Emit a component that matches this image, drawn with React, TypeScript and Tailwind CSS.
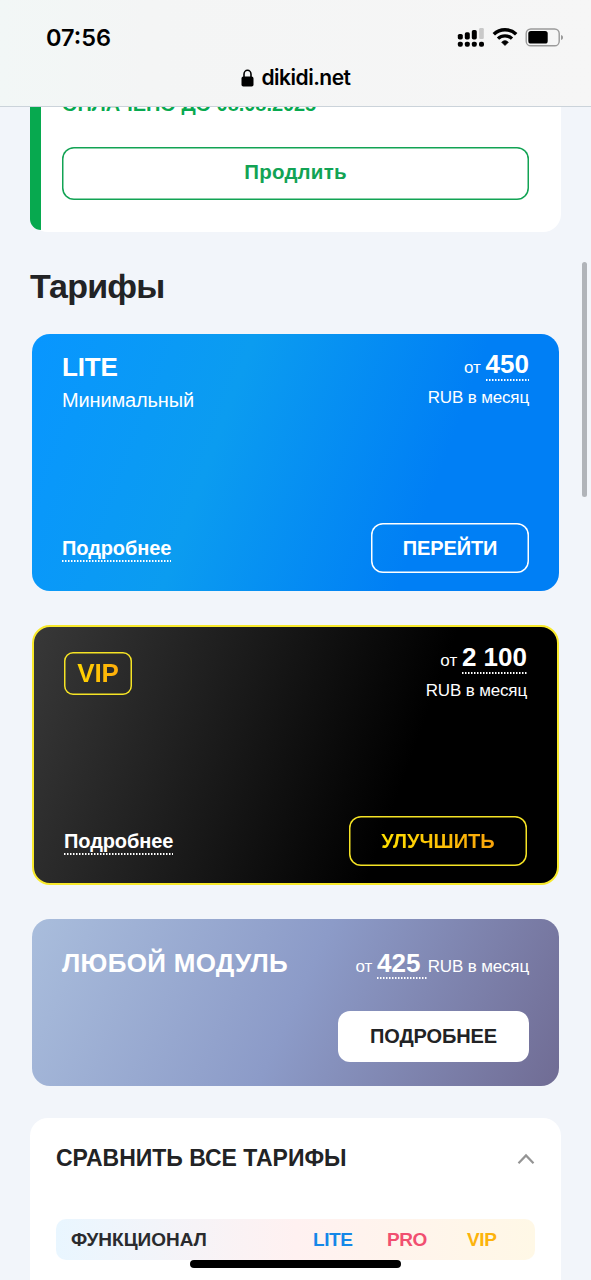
import type { ReactNode } from "react";
import { clsx } from "clsx";

function StatusIcons() {
  return (
    <svg className="h-[22px] w-[108px]" viewBox="0 0 108 22">
      {/* dual sim signal */}
      <g fill="#000">
        <rect x="0.8" y="8.9" width="5" height="5.5" rx="1.7" />
        <rect x="7.8" y="7.2" width="5" height="7.2" rx="1.7" />
        <rect x="14.8" y="5.1" width="5" height="9.3" rx="1.7" />
        <rect x="0.8" y="16.7" width="5" height="5" rx="1.9" />
        <rect x="7.8" y="16.7" width="5" height="5" rx="1.9" />
        <rect x="14.8" y="16.7" width="5" height="5" rx="1.9" />
        <rect x="22" y="16.7" width="5" height="5" rx="1.9" />
      </g>
      <rect x="22.2" y="3" width="4.6" height="11" rx="1.2" fill="#c9c9c9" />
      {/* wifi */}
      <g fill="none" stroke="#000">
        <path d="M36.8 9.2a16.2 16.2 0 0 1 22.4 0" strokeWidth="3.5" />
        <path d="M41 13.6a10.2 10.2 0 0 1 14 0" strokeWidth="3.3" />
      </g>
      <path d="M44.6 17.2a5 5 0 0 1 6.8 0L48 20.6z" fill="#000" stroke="#000" strokeWidth="0.6" strokeLinejoin="round" />
      {/* battery */}
      <rect x="69.2" y="4" width="33" height="16.8" rx="4.6" fill="none" stroke="#9a9a9a" strokeWidth="1.4" />
      <rect x="71.3" y="6.1" width="19.4" height="12.4" rx="2.6" fill="#000" />
      <path d="M104 10.1c1.6.5 2 1.4 2 2.4s-.4 1.9-2 2.4z" fill="#9a9a9a" />
    </svg>
  );
}

function BrowserHeader() {
  return (
    <header className="relative z-10 h-[107px] shrink-0 border-b border-[#cbd3da] bg-gradient-to-r from-[#f2f7f6] via-[#f4f5f5] via-25% to-[#f6f6f6] font-['Inter',sans-serif] text-black">
      <div className="flex items-start justify-between pl-[46px] pr-[26px] pt-[22px]">
        <span className="text-[23.5px] font-semibold leading-8">07:56</span>
        <span className="pt-[3px]">
          <StatusIcons />
        </span>
      </div>
      <div className="mt-2 flex items-center justify-center gap-[7px] pl-px">
        <svg className="h-[18px] w-[13px]" viewBox="0 0 13 18">
          <rect x="0.5" y="7.6" width="12" height="9.9" rx="1.8" fill="#000" />
          <path d="M3 8.4V5.2a3.5 3.9 0 0 1 7 0v3.2" fill="none" stroke="#000" strokeWidth="1.6" />
        </svg>
        <span className="pt-px text-[21px] font-semibold leading-[30px] tracking-[-0.5px]">dikidi.net</span>
      </div>
    </header>
  );
}

function Dotted({ children, className }: { children: ReactNode; className?: string }) {
  return (
    <span
      className={clsx(
        "inline-block whitespace-pre bg-[repeating-linear-gradient(90deg,#fff_0_1px,#ffffff80_1px_2px,transparent_2px_3px)] bg-[length:100%_2px] bg-bottom bg-no-repeat font-bold",
        className,
      )}
    >
      {children}
    </span>
  );
}

function Price({ amount }: { amount: string }) {
  return (
    <div className="text-right text-[17px] text-white">
      <div className="h-[34px] leading-[27px]">
        от <Dotted className="h-[30px] text-[26px] leading-[27px]">{amount}</Dotted>
      </div>
      <div className="leading-[26px] tracking-[-0.15px]">RUB в месяц</div>
    </div>
  );
}

function More() {
  return <Dotted className="h-[28px] text-[20px] leading-[28px] tracking-[-0.1px] text-white">Подробнее</Dotted>;
}

export default function App() {
  return (
    <div className="relative flex h-[1280px] w-[591px] flex-col overflow-hidden bg-[#f2f5fa] font-['Liberation_Sans',Arial,sans-serif] text-[#222325]">
      <BrowserHeader />

      <main className="flex flex-col px-[30px]">
        {/* current subscription */}
        <section className="-mt-[17px] flex h-[142px] rounded-b-[18px] bg-white">
          <div className="h-[140px] w-[11px] shrink-0 rounded-bl-[11px] bg-[#07a94f]" />
          <div className="flex flex-col pl-[21px] pr-8">
            <p className="text-[20px] font-bold leading-7 tracking-[-0.05px] text-[#07a94f]">ОПЛАЧЕНО ДО 08.08.2025</p>
            <button className="mt-[29px] h-[53px] w-[467px] shrink-0 rounded-[12px] pb-[2px] text-[20.5px] font-bold tracking-[0.2px] text-[#12a354] shadow-[inset_0_0_0_1.5px_#12a354]">
              Продлить
            </button>
          </div>
        </section>

        <h1 className="mt-[32px] text-[34px] font-bold leading-[44px] tracking-[-0.8px]">Тарифы</h1>

        <div className="mt-[26px] flex flex-col gap-[34px] px-[2px]">
          <section className="flex h-[257px] flex-col justify-between rounded-[18px] bg-[linear-gradient(110deg,#0896ff_0%,#0b9cf0_36%,#007ff5_74%,#007ff5_100%)] px-[30px] pb-[18px] pt-[17px] text-white">
            <div className="flex justify-between">
              <div>
                <h2 className="text-[26px] font-bold leading-8 tracking-[-0.2px]">LITE</h2>
                <p className="mt-[3px] text-[20px] leading-7 tracking-[-0.15px]">Минимальный</p>
              </div>
              <Price amount="450" />
            </div>
            <div className="flex items-end justify-between">
              <div className="flex pb-[11px]">
                <More />
              </div>
              <button className="h-[50px] w-[158px] rounded-[12px] text-[20px] font-bold tracking-[-0.1px] shadow-[inset_0_0_0_1.5px_#fff]">
                ПЕРЕЙТИ
              </button>
            </div>
          </section>

          <section className="flex h-[260px] flex-col justify-between rounded-[18px] border-2 border-[#f8e92b] bg-[linear-gradient(110deg,#383838_0%,#000_69%)] px-[30px] pb-[17px] pt-[17px] text-white">
            <div className="flex justify-between">
              <div className="mt-[8px] flex h-[43px] w-[68px] items-center justify-center rounded-[9px] shadow-[inset_0_0_0_1.5px_#f5e325]">
                <span className="bg-gradient-to-r from-[#ffd500] to-[#ffad0a] bg-clip-text text-[26px] font-bold tracking-[-0.2px] text-transparent">
                  VIP
                </span>
              </div>
              <Price amount="2 100" />
            </div>
            <div className="flex items-end justify-between">
              <div className="flex pb-[11px]">
                <More />
              </div>
              <button className="h-[50px] w-[178px] rounded-[12px] text-[20px] font-bold shadow-[inset_0_0_0_1.5px_#f5e325]">
                <span className="bg-gradient-to-r from-[#ffe100] to-[#f9a30b] bg-clip-text text-transparent">
                  УЛУЧШИТЬ
                </span>
              </button>
            </div>
          </section>

          <section className="flex h-[167px] flex-col justify-between rounded-[18px] bg-[linear-gradient(115deg,#a9bddc_0%,#8c9bc8_50%,#706c94_100%)] px-[30px] pb-[24px] pt-[29px] text-white">
            <div className="flex justify-between">
              <h2 className="text-[26px] font-bold leading-[30px] tracking-[0.3px]">ЛЮБОЙ МОДУЛЬ</h2>
              <p className="text-[17px] leading-[30px]">
                от <Dotted className="h-[31px] text-[26px] leading-[30px]">{"425 "}</Dotted>
                <span className="tracking-[-0.15px]">RUB в месяц</span>
              </p>
            </div>
            <button className="h-[51px] w-[191px] self-end rounded-[12px] bg-white pb-px text-[20px] font-bold tracking-[-0.1px] text-[#222325]">
              ПОДРОБНЕЕ
            </button>
          </section>
        </div>

        {/* plan comparison */}
        <section className="mt-[32px] h-[200px] rounded-[18px] bg-white px-[26px] pt-[24px]">
          <div className="flex items-center justify-between">
            <h2 className="text-[23px] font-bold leading-8">СРАВНИТЬ ВСЕ ТАРИФЫ</h2>
            <svg className="mt-[2px] h-[12px] w-[18px]" viewBox="0 0 18 12">
              <path d="M1.5 10.2 9 2.4l7.5 7.8" fill="none" stroke="#949494" strokeWidth="2.2" />
            </svg>
          </div>
          <div className="mt-[45px] grid h-[41px] w-[479px] grid-cols-[242px_74px_80px_68px] items-center rounded-[10px] bg-gradient-to-r from-[#e9f6ff] via-[#fff1f1] to-[#fff8e6] pl-[15px] pt-[2px] text-[19px] font-bold">
            <span className="text-[#2a2b2e]">ФУНКЦИОНАЛ</span>
            <span className="tracking-[-0.4px] text-[#1587e8]">LITE</span>
            <span className="tracking-[-0.4px] text-[#f14f70]">PRO</span>
            <span className="tracking-[-0.3px] text-[#fcb30c]">VIP</span>
          </div>
        </section>
      </main>

      {/* scrollbar and home indicator */}
      <div className="absolute left-[582px] top-[262px] h-[235px] w-[5px] rounded-full bg-[#b1b4b9]" />
      <div className="absolute left-[190px] top-[1260px] h-[8px] w-[211px] rounded-full bg-black" />
    </div>
  );
}
